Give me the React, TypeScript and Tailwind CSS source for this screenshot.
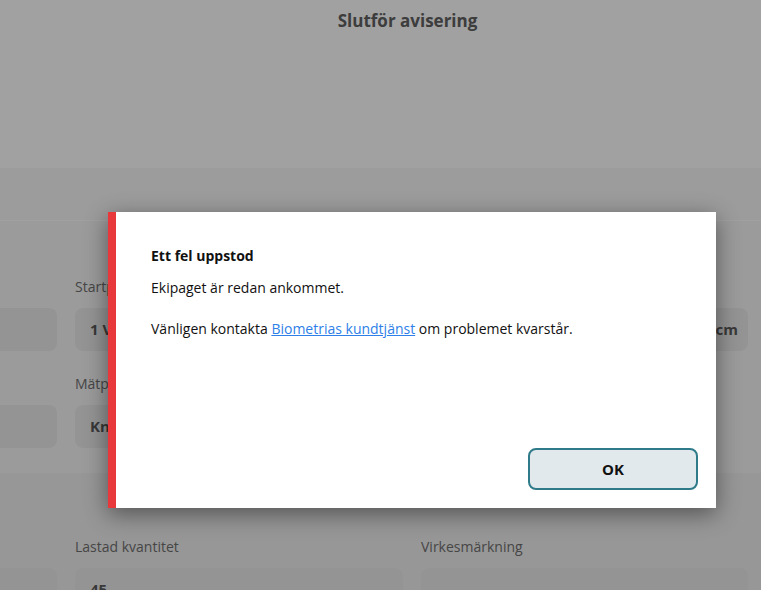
import React from "react";

const Field = ({
  label,
  value,
  suffix,
}: {
  label?: string;
  value?: string;
  suffix?: string;
}) => {
  return (
    <div className="flex flex-col">
      <span className="h-[20px] text-[14px] leading-[20px] text-[#6f6f6f]">
        {label ?? "\u00a0"}
      </span>
      <div className="mt-[11px] flex h-[43px] items-center justify-between rounded-lg bg-[#ebebeb] pl-[15px] pr-[10px] text-[15px] font-bold text-[#5a5a5a]">
        <span>{value}</span>
        {suffix && <span>{suffix}</span>}
      </div>
    </div>
  );
};

export default function App() {
  return (
    <div className="relative h-[590px] w-[761px] overflow-hidden bg-white font-['Open_Sans',sans-serif]">
      {/* page under the dialog */}
      <header className="flex h-[168px] justify-center bg-white pl-[54px] pt-[9px]">
        <h1 className="text-[17px] font-bold leading-[24px] text-[#616161]">
          Slutför avisering
        </h1>
      </header>
      <div className="h-[52px] bg-[#f8f8f8]" />
      <section className="border-t border-[#fefefe] bg-[#f6f6f6] pb-[25px] pt-[56px]">
        <div className="ml-[-271px] grid grid-cols-[328px_328px_327px] gap-x-[18px] gap-y-[23px]">
          <Field label="Avlastningsplats" value="Terminal" />
          <Field label="Startplats" value="1 Vänster" />
          <Field label="Höjd" value="30" suffix="cm" />
          <Field label="Mätplats" value="Mätstation" />
          <Field label="Mätplats" value="Knappen" />
          <div />
        </div>
      </section>
      <section className="bg-[#efefef] pt-[64px]">
        <div className="ml-[-271px] grid grid-cols-[328px_328px_327px] gap-x-[18px]">
          <Field label="Sortiment" value="Massaved" />
          <Field label="Lastad kvantitet" value="45" />
          <Field label="Virkesmärkning" />
        </div>
      </section>

      {/* dialog overlay */}
      <div className="absolute inset-0 bg-black/[0.37]">
        <div className="ml-[108px] mt-[212px] flex h-[296px] w-[608px] flex-col border-l-[8px] border-[#e8383b] bg-white pb-[18px] pl-[35px] pr-[18px] pt-[33px] text-[14px] leading-[22px] text-[#111] shadow-[0_6px_22px_rgba(0,0,0,0.45)]">
          <h2 className="font-bold">Ett fel uppstod</h2>
          <p className="mt-[10px]">Ekipaget är redan ankommet.</p>
          <p className="mt-[19px]">
            Vänligen kontakta{" "}
            <a href="#" className="text-[#2e7fe8] underline">
              Biometrias kundtjänst
            </a>{" "}
            om problemet kvarstår.
          </p>
          <div className="mt-auto flex justify-end">
            <button className="h-[42px] w-[170px] rounded-[8px] border-2 border-[#2f7b8a] bg-[#e2e9ec] text-[15px] font-bold text-[#111]">
              OK
            </button>
          </div>
        </div>
      </div>
    </div>
  );
}
